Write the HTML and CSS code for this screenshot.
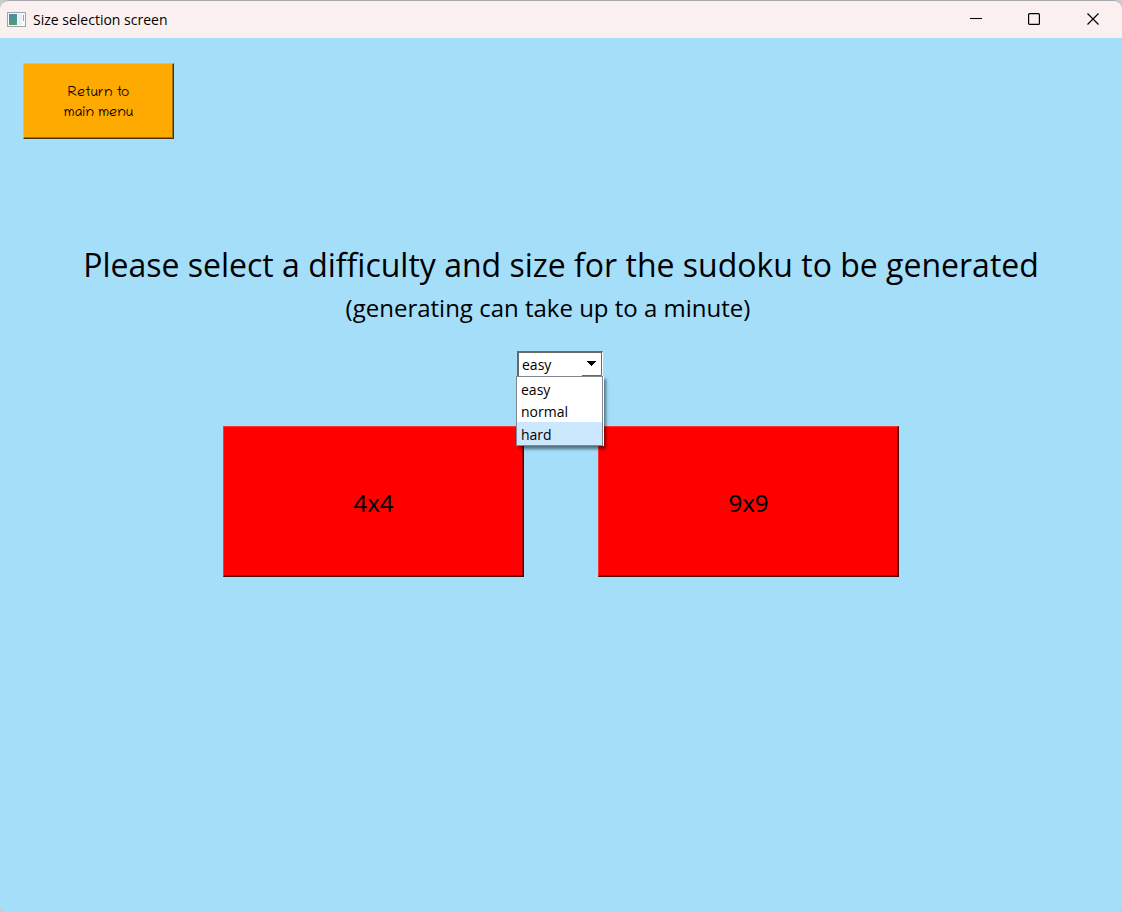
FILE: index.html
```html
<!DOCTYPE html>
<html lang="en">
<head>
<meta charset="utf-8">
<title>Size selection screen</title>
<link rel="stylesheet" href="styles.css">
</head>
<body>
<div class="window">
  <header class="titlebar">
    <svg class="app-icon" width="20" height="16" viewBox="0 0 20 16" aria-hidden="true">
      <defs>
        <linearGradient id="pane" x1="0" y1="0" x2="0.6" y2="1">
          <stop offset="0" stop-color="#4a86b0"/>
          <stop offset="1" stop-color="#4f9f74"/>
        </linearGradient>
      </defs>
      <rect x="0.5" y="0.5" width="18" height="14" fill="#f8fafa" stroke="#a2a5a8"/>
      <rect x="2" y="2" width="8" height="11" fill="url(#pane)"/>
      <rect x="11" y="2" width="4" height="11" fill="#e6f0f5"/>
      <rect x="16" y="3" width="1" height="6" fill="#7fa7c0"/>
    </svg>
    <span class="title">Size selection screen</span>
    <div class="controls">
      <button class="control" type="button" aria-label="Minimize">
        <svg width="14" height="14" viewBox="0 0 14 14"><path d="M0 5.5H12" stroke="#000" fill="none"/></svg>
      </button>
      <button class="control" type="button" aria-label="Maximize">
        <svg width="14" height="14" viewBox="0 0 14 14"><rect x="0.6" y="0.6" width="10.8" height="10.8" rx="1" stroke="#000" stroke-width="1.2" fill="none"/></svg>
      </button>
      <button class="control" type="button" aria-label="Close">
        <svg width="14" height="14" viewBox="0 0 14 14"><path d="M1.5 0.5L12.5 11.5M12.5 0.5L1.5 11.5" stroke="#000" stroke-width="1.2" fill="none"/></svg>
      </button>
    </div>
  </header>
  <main class="screen">
    <button class="raised return" type="button">Return to<br>main menu</button>
    <h1 class="heading">Please select a difficulty and size for the sudoku to be generated</h1>
    <p class="note">(generating can take up to a minute)</p>
    <div class="difficulty">
      <select class="combo" aria-label="Difficulty">
        <option selected>easy</option>
        <option>normal</option>
        <option>hard</option>
      </select>
      <svg class="arrow" width="20" height="23" viewBox="0 0 20 23" aria-hidden="true">
        <path d="M5 8H14V9H13V10H12V11H11V12H10V13H9V12H8V11H7V10H6V9H5Z" fill="#000"/>
        <path d="M0 22.5H19.5V0" stroke="#69696b" fill="none"/>
      </svg>
      <ul class="menu">
        <li class="choice">easy</li>
        <li class="choice">normal</li>
        <li class="choice active">hard</li>
      </ul>
    </div>
    <div class="sizes">
      <button class="raised size" type="button">4x4</button>
      <button class="raised size" type="button">9x9</button>
    </div>
  </main>
</div>
</body>
</html>
```
FILE: styles.css
```css
* {
  box-sizing: border-box;
}

body {
  margin: 0;
  background: #c8cdd2;
  color: #000;
  font-family: "Open Sans", "Noto Sans", sans-serif;
}

.window {
  display: flex;
  flex-direction: column;
  min-height: 100vh;
  overflow: hidden;
  border-top: 1px solid #a6a6aa;
  border-radius: 9px 9px 7px 7px;
  background: #a4def9;
}

.titlebar {
  display: flex;
  align-items: center;
  height: 37px;
  padding-left: 7px;
  background: #f9f0ef;
}

.app-icon {
  margin-right: 6px;
}

.title {
  flex: 1;
  font-size: 14px;
  line-height: 20px;
}

.controls {
  display: flex;
}

.control {
  display: flex;
  align-items: center;
  justify-content: center;
  width: 58px;
  height: 37px;
  padding: 0;
  border: 0;
  background: none;
}

.screen {
  display: flex;
  flex: 1;
  flex-direction: column;
  align-items: center;
  padding: 25px 23px;
}

.raised {
  border: 1px solid;
  color: #000;
}

.return {
  align-self: flex-start;
  width: 151px;
  height: 76px;
  padding: 6px 0 0;
  border-color: #ffb833 #4a3200 #4a3200 #ffb833;
  background: #ffaa00;
  box-shadow: inset -1px -1px #aa7100;
  font-family: "Chilanka", "Lato", sans-serif;
  font-size: 14px;
  line-height: 20px;
}

.heading {
  margin: 104px 0 0;
  font-size: 32px;
  font-weight: 400;
  line-height: 44px;
  text-align: center;
}

.note {
  margin: 3px 0 0;
  padding-right: 26px;
  font-size: 24px;
  line-height: 36px;
  text-align: center;
}

.difficulty {
  position: relative;
  width: 88px;
  margin-top: 25px;
}

.combo {
  display: block;
  width: 86px;
  height: 26px;
  padding: 0 0 0 3px;
  border: 2px solid;
  border-color: #69696b #fff #fff #69696b;
  border-width: 2px 1px 1px 2px;
  border-radius: 0;
  appearance: none;
  background: #fff;
  color: #000;
  font-family: inherit;
  font-size: 14px;
}

.arrow {
  position: absolute;
  top: 2px;
  right: 3px;
}

.menu {
  position: absolute;
  top: 25px;
  left: -1px;
  width: 87px;
  margin: 0;
  padding: 1px 0 0;
  border: 1px solid #828790;
  background: #fff;
  box-shadow: 1px 0 #fff, 3px 3px 3px rgba(0, 0, 0, 0.5);
  list-style: none;
}

.choice {
  height: 22px;
  padding-left: 4px;
  font-size: 14px;
  line-height: 24px;
}

.active {
  height: 23px;
  background: #cce8ff;
  line-height: 25px;
}

.sizes {
  display: flex;
  justify-content: center;
  gap: 74px;
  margin-top: 49px;
}

.size {
  width: 301px;
  height: 151px;
  padding: 3px 0 0;
  border-color: #ff3333 #4a0000 #4a0000 #ff3333;
  background: #ff0000;
  box-shadow: inset -1px -1px #aa0000;
  font-family: "Noto Sans", sans-serif;
  font-size: 24px;
  line-height: 32px;
}
```
